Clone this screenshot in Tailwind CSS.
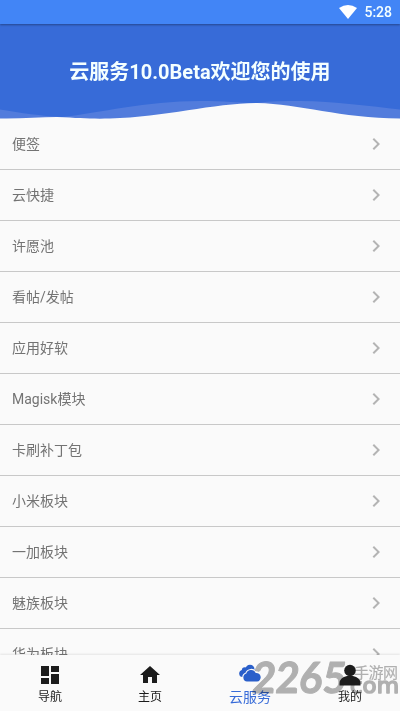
<!DOCTYPE html>
<html lang="zh-CN">
<head>
<meta charset="utf-8">
<title>云服务</title>
<script src="https://cdn.jsdelivr.net/npm/@tailwindcss/browser@4"></script>
</head>
<body class="bg-[#fafafa] font-['Roboto','Noto_Sans_CJK_SC',sans-serif]">
<div class="relative w-[400px] h-[711px] overflow-hidden flex flex-col">
  <div class="relative z-10 h-6 shrink-0 bg-[#4285f6] flex items-center justify-end pr-2 gap-[7px] text-[#f4ffff] shadow-[0_1px_2px_rgba(0,0,0,0.35)]">
    <svg class="w-[18px] h-[14px]" viewBox="0 0 18 14"><path d="M0 3Q9-3 18 3L9 14Z" fill="#fff"/></svg>
    <span class="text-[14px] leading-6 font-medium">5:28</span>
  </div>
  <header class="relative h-[95px] shrink-0 bg-[#376bd8] flex justify-center">
    <h1 class="mt-[33px] text-[20px] leading-[30px] font-bold text-[#f4ffff] whitespace-nowrap">云服务10.0Beta欢迎您的使用</h1>
    <svg class="absolute left-0 bottom-0 w-[400px] h-5" viewBox="0 99 400 20">
      <path d="M0 109.500C22 113 40 116 62 117C100 113 145 101 200 101C225 101 240 103 257 103C270 101 285 101 300 101C335 101.500 370 106 400 109.500V119H0Z" fill="#527cdc"/>
      <path d="M0 118.500C20 119 40 117 57 117C80 118 90 119 110 118.500C165 117 215 103 257 103C300 104 340 118 400 118.500V120H0Z" fill="#fafafa"/>
    </svg>
  </header>
  <main id="list" class="flex-1 min-h-0 overflow-hidden"></main>
  <nav class="relative h-14 shrink-0 bg-[#fafafa] grid grid-cols-4 text-[12px] leading-4 text-[#1c1c1c] shadow-[0_-1px_2px_rgba(0,0,0,0.09)]">
    <div class="flex flex-col items-center pt-2"><svg class="size-6" viewBox="0 0 24 24" fill="#1c1c1c"><path d="M3 13h8V3H3v10zm0 8h8v-6H3v6zm10 0h8V11h-8v10zm0-18v6h8V3h-8z"/></svg><span class="mt-[2px]">导航</span></div>
    <div class="flex flex-col items-center pt-2"><svg class="size-6" viewBox="0 0 24 24" fill="#1c1c1c"><path d="M10 20v-6h4v6h5v-8h3L12 3 2 12h3v8z"/></svg><span class="mt-[2px]">主页</span></div>
    <div class="flex flex-col items-center pt-[6px] text-[14px] text-[#376bd8]"><svg class="size-6" viewBox="0 0 24 24" fill="#2a5fca"><g><circle cx="4.800" cy="12.500" r="3.600"/><circle cx="6.800" cy="9.200" r="3"/><circle cx="12" cy="8.300" r="4.500"/><path d="M5 8H14V16H5Z"/></g><path d="M9 20.600A4.100 4.100 0 0 1 8.300 12.600A5 5 0 0 1 17.700 12A4.300 4.300 0 0 1 19 20.600Z" stroke="#fafafa" stroke-width="2.200" paint-order="stroke"/></svg><span class="mt-[4px]">云服务</span></div>
    <div class="flex flex-col items-center pt-2"><svg class="size-6 relative z-10" viewBox="0 0 24 24" fill="#1c1c1c"><circle cx="12" cy="7.500" r="5.800"/><path d="M1.500 22.500V20Q2 14.500 9 13h6Q22 14.500 22.500 20v2.500Z"/></svg><span class="mt-[2px] relative z-10">我的</span></div>
    <svg class="absolute left-[250px] top-0 w-[150px] h-14 mix-blend-multiply" viewBox="250 655 150 56" fill="#b4b4b4" stroke="#b4b4b4">
      <text x="251" y="693" transform="translate(61 0) skewX(-5)" font-family="Lato" font-weight="700" font-size="43" textLength="94" lengthAdjust="spacingAndGlyphs" stroke-width="1" stroke-linejoin="round">2265</text>
      <text x="354" y="678" font-family="Noto Sans CJK SC" font-weight="400" font-size="15" textLength="44" stroke-width=".2">手游网</text>
      <text x="350" y="692.500" font-family="DejaVu Sans" font-size="21" textLength="49" lengthAdjust="spacingAndGlyphs" stroke-width="1.500" stroke-linejoin="round">com</text>
    </svg>
  </nav>
</div>
<script>
document.getElementById('list').innerHTML = ['便签','云快捷','许愿池','看帖/发帖','应用好软','Magisk模块','卡刷补丁包','小米板块','一加板块','魅族板块','华为板块'].map(t =>
 `<div class="h-[51px] border-b border-[#c8c8c8] pl-3 pr-3 flex items-center justify-between text-[14px] text-[#737373]"><span>${t}</span><svg class="size-6" viewBox="0 0 24 24" fill="#b4b4b4"><path d="M10 6L8.590 7.410 13.170 12l-4.580 4.590L10 18l6-6z"/></svg></div>`).join('');
</script>
</body>
</html>
